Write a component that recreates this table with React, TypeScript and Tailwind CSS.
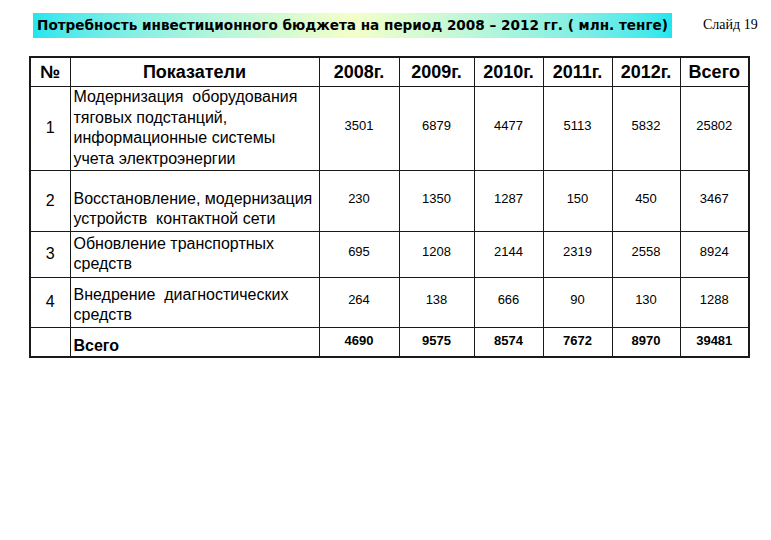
import React from "react";

const years = ["2008г.", "2009г.", "2010г.", "2011г.", "2012г.", "Всего"];

type Row = {
  n: string;
  lines: string[];
  values: string[];
  h: string;
  pad?: string;
};

const rows: Row[] = [
  {
    n: "1",
    lines: [
      "Модернизация  оборудования",
      "тяговых подстанций,",
      "информационные системы",
      "учета электроэнергии",
    ],
    values: ["3501", "6879", "4477", "5113", "5832", "25802"],
    h: "h-[84px]",
  },
  {
    n: "2",
    lines: ["Восстановление, модернизация", "устройств  контактной сети"],
    values: ["230", "1350", "1287", "150", "450", "3467"],
    h: "h-[61px]",
    pad: "pt-[17px]",
  },
  {
    n: "3",
    lines: ["Обновление транспортных", "средств"],
    values: ["695", "1208", "2144", "2319", "2558", "8924"],
    h: "h-[46px]",
  },
  {
    n: "4",
    lines: ["Внедрение  диагностических", "средств"],
    values: ["264", "138", "666", "90", "130", "1288"],
    h: "h-[50px]",
    pad: "pt-[6px]",
  },
];

const totals = ["4690", "9575", "8574", "7672", "8970", "39481"];
const colW = ["w-[80px]", "w-[75px]", "w-[69px]", "w-[69px]", "w-[68px]", "w-[69px]"];

export default function App() {
  return (
    <div className="relative h-[540px] w-[771px] overflow-hidden bg-white font-['Liberation_Sans',Arial,sans-serif] text-black">
      <div className="flex items-start pl-[33px] pt-[13px]">
        <div className="flex h-[25px] w-[639px] items-center bg-gradient-to-r from-[#1ee6ee] via-[#f4ffc8] to-[#1ee6ee] pl-[4px] font-['DejaVu_Sans',Verdana,sans-serif] text-[13.6px] font-bold leading-none">
          Потребность инвестиционного бюджета на период 2008 – 2012 гг. ( млн. тенге)
        </div>
        <div className="ml-[31px] pt-[5px] font-['Liberation_Serif','Times_New_Roman',serif] text-[14px] leading-none">
          Слайд 19
        </div>
      </div>

      <div className="pl-[29px] pt-[18px]">
        <table className="w-[719px] table-fixed border-collapse border-2 border-[#1a1a1a]">
          <thead>
            <tr className="h-[29px] text-[18px] font-bold leading-none">
              <th className="w-[40px] border-[1.5px] border-[#1a1a1a] text-center">№</th>
              <th className="w-[249px] border-[1.5px] border-[#1a1a1a] text-center">Показатели</th>
              {years.map((y, i) => (
                <th key={y} className={`${colW[i]} border-[1.5px] border-[#1a1a1a] text-center`}>
                  {y}
                </th>
              ))}
            </tr>
          </thead>
          <tbody>
            {rows.map((r) => (
              <tr key={r.n} className={r.h}>
                <td className="border-[1.5px] border-[#1a1a1a] text-center align-middle text-[16px]">
                  {r.n}
                </td>
                <td
                  className={`border-[1.5px] border-[#1a1a1a] pl-[3px] align-middle text-[16px] leading-[20.5px] whitespace-pre ${r.pad ?? ""}`}
                >
                  {r.lines.map((l, i) => (
                    <div key={i}>{l}</div>
                  ))}
                </td>
                {r.values.map((v, i) => (
                  <td
                    key={i}
                    className="border-[1.5px] border-[#1a1a1a] pb-[4px] text-center align-middle text-[13px]"
                  >
                    {v}
                  </td>
                ))}
              </tr>
            ))}
            <tr className="h-[30px]">
              <td className="border-[1.5px] border-[#1a1a1a]"></td>
              <td className="border-[1.5px] border-[#1a1a1a] pl-[3px] pt-[8px] align-middle text-[16px] font-bold leading-none">
                Всего
              </td>
              {totals.map((v, i) => (
                <td
                  key={i}
                  className="border-[1.5px] border-[#1a1a1a] pb-[2px] text-center align-middle text-[13px] font-bold"
                >
                  {v}
                </td>
              ))}
            </tr>
          </tbody>
        </table>
      </div>
    </div>
  );
}
